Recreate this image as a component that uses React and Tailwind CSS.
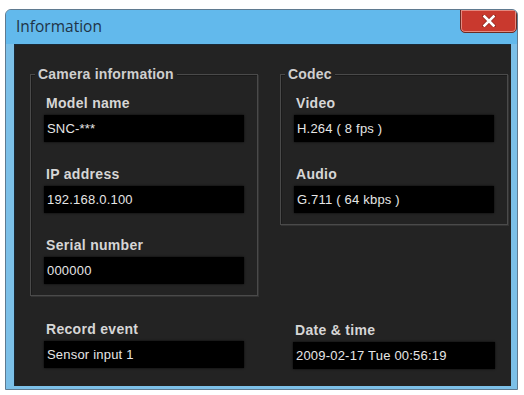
import React from "react";

const Field = ({ label, value }) => (
  <div className="flex flex-col">
    <div className="pl-[2px] h-[20px] leading-[20px] text-[14px] font-bold tracking-[0.3px] text-[#d6d6d6]">
      {label}
    </div>
    <div className="mt-[2px] h-[27px] bg-black pl-[3px] leading-[27px] text-[13px] tracking-[0.2px] text-[#e6e6e6] shadow-[0_0_2px_rgba(0,0,0,0.8)]">
      {value}
    </div>
  </div>
);

const Group = ({ title, children }) => (
  <div className="w-[228px] border border-[#4a4a4a] shadow-[inset_1px_1px_0_#1a1a1a,1px_1px_0_#333] px-[13px] pb-[11px]">
    <div className="-mt-[11px] -ml-[9px] w-fit bg-[#232323] px-[3px] h-[20px] leading-[20px] text-[14px] font-bold tracking-[0.2px] text-[#cfcfcf]">
      {title}
    </div>
    <div className="mt-[9px] flex flex-col gap-[22px]">{children}</div>
  </div>
);

export default function App() {
  return (
    <div
      className="w-[524px] h-[395px] bg-white overflow-hidden"
      style={{ fontFamily: '"Liberation Sans", Arial, sans-serif' }}
    >
      <div className="ml-[5px] mt-[9px] w-[513px] h-[381px] rounded-t-[6px] border border-[#5f7a90] bg-[#7cc0e8] flex flex-col overflow-hidden">
        {/* Title bar */}
        <div className="h-[34px] flex items-start justify-between bg-[#62b9ec]">
          <div
            className="pl-[10px] pt-[5px] text-[15.5px] leading-[22px] text-[#1f3346]"
            style={{ fontFamily: '"Open Sans", "DejaVu Sans", sans-serif' }}
          >
            Information
          </div>
          <div className="-mt-px mr-0 w-[57px] h-[24px] rounded-b-[5px] border border-[#6b2b24] bg-[#c9392e] flex items-center justify-center shadow-[inset_0_0_0_1px_rgba(255,220,210,0.5)]">
            <svg width="14" height="12" viewBox="0 0 14 12">
              <path d="M2 1 L12 11 M12 1 L2 11" stroke="#5a1a14" strokeWidth="4" strokeLinecap="round" opacity="0.5" />
              <path d="M2.5 1.5 L11.5 10.5 M11.5 1.5 L2.5 10.5" stroke="#ffffff" strokeWidth="2.6" strokeLinecap="square" />
            </svg>
          </div>
        </div>
        {/* Body */}
        <div className="ml-[8px] mr-[6px] h-[342px] bg-[#232323] border-t border-l border-[#1a2a38] pl-[15px] pt-[29px] flex flex-col">
          <div className="flex items-start gap-[22px]">
            <Group title="Camera information">
              <Field label="Model name" value="SNC-***" />
              <Field label="IP address" value="192.168.0.100" />
              <Field label="Serial number" value="000000" />
            </Group>
            <Group title="Codec">
              <Field label="Video" value="H.264 ( 8 fps )" />
              <Field label="Audio" value="G.711 ( 64 kbps )" />
            </Group>
          </div>
          <div className="mt-[23px] flex gap-[22px]">
            <div className="w-[228px] px-[14px]">
              <Field label="Record event" value="Sensor input 1" />
            </div>
            <div className="w-[228px] px-[13px] pt-[1px]">
              <Field label="Date & time" value="2009-02-17 Tue 00:56:19" />
            </div>
          </div>
        </div>
      </div>
    </div>
  );
}
